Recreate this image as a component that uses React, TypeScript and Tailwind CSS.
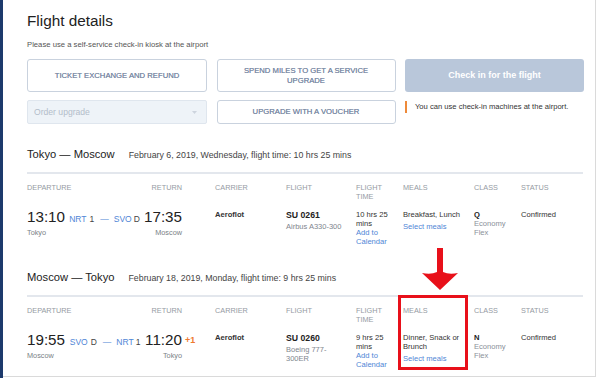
import React from "react";

const blue = "text-[#4f86d6]";

function Header() {
  return (
    <div className="mt-[8.5px] grid grid-cols-[188px_71px_70px_47px_71px_47px_1fr] text-[7.3px] leading-[9px] text-[#959ba3] uppercase">
      <div className="w-[155px] flex justify-between">
        <span>Departure</span>
        <span>Return</span>
      </div>
      <div>Carrier</div>
      <div>Flight</div>
      <div>
        <div>Flight</div>
        <div>Time</div>
      </div>
      <div>Meals</div>
      <div>Class</div>
      <div>Status</div>
    </div>
  );
}

type Row = {
  dep: string;
  arr: string;
  from: string;
  fromT: string;
  to: string;
  toT: string;
  depCity: string;
  arrCity: string;
  plus?: boolean;
  flight: string;
  plane: string[];
  time: string[];
  meals: string[];
  cls: string;
};

function DataRow({ r }: { r: Row }) {
  return (
    <div className="mt-[8.5px] grid grid-cols-[188px_71px_70px_47px_71px_47px_1fr] text-[7.6px] leading-[9px] text-[#333]">
      <div className="grid grid-cols-[155px_1fr]">
        <div>
          <div className="flex items-baseline justify-between leading-[16px]">
            <span className="text-[15.2px] text-[#222]">{r.dep}</span>
            <span className="text-[8.5px] flex items-baseline">
              <span className={blue}>{r.from}</span>
              <span className="ml-[3px] text-[#444]">{r.fromT}</span>
              <span className={`ml-[6px] ${blue}`}>—</span>
              <span className={`ml-[5px] ${blue}`}>{r.to}</span>
              <span className="ml-[2px] text-[#444]">{r.toT}</span>
            </span>
            <span className="text-[15.2px] text-[#222]">{r.arr}</span>
          </div>
          <div className="mt-[0.5px] flex justify-between text-[7.3px] text-[#7a7f86]">
            <span>{r.depCity}</span>
            <span>{r.arrCity}</span>
          </div>
        </div>
        <div className="leading-[16px]">
          {r.plus && (
            <span className="ml-[3px] text-[9px] font-bold text-[#ee7a2f]">+1</span>
          )}
        </div>
      </div>
      <div className="pt-[0.5px] font-bold">Aeroflot</div>
      <div>
        <div className="text-[8.7px] leading-[12px] font-bold text-[#222]">{r.flight}</div>
        <div className="mt-[1px] text-[7.5px] text-[#80868e]">
          {r.plane.map((p) => (
            <div key={p}>{p}</div>
          ))}
        </div>
      </div>
      <div className="pt-[0.5px]">
        <div>{r.time[0]}</div>
        <div>{r.time[1]}</div>
        <div className={blue}>Add to</div>
        <div className={blue}>Calendar</div>
      </div>
      <div className="pt-[0.5px]">
        {r.meals.map((m) => (
          <div key={m}>{m}</div>
        ))}
        <div className={`mt-[3.5px] ${blue}`}>Select meals</div>
      </div>
      <div className="pt-[0.5px]">
        <div className="font-bold text-[#222]">{r.cls}</div>
        <div className="text-[#8a9099]">Economy</div>
        <div className="text-[#8a9099]">Flex</div>
      </div>
      <div className="pt-[0.5px]">Confirmed</div>
    </div>
  );
}

function Section({ title, date, row, className }: { title: string; date: string; row: Row; className?: string }) {
  return (
    <div className={className}>
      <div className="flex items-baseline">
        <span className="text-[11.2px] leading-[14px] text-[#222]">{title}</span>
        <span className="ml-[14px] text-[8.8px] leading-[14px] text-[#444]">{date}</span>
      </div>
      <div className="mt-[10px] h-[2px] w-[556px] bg-[#e3e7ed]" />
      <Header />
      <DataRow r={row} />
    </div>
  );
}

export default function App() {
  const btn =
    "flex items-center justify-center rounded-[3px] border border-[#c9d2de] bg-white text-center text-[7.7px] leading-[10px] text-[#7d8ca6] uppercase [text-shadow:0_0_0.3px_#7d8ca6]";
  return (
    <div
      className="relative flex h-[378px] w-[600px] overflow-hidden bg-white"
      style={{ fontFamily: '"Liberation Sans", Arial, sans-serif' }}
    >
      <div className="h-full w-[3px] bg-[#1d3a6c]" />
      <div className="h-[377px] w-[593px] border-r border-b border-[#dadada] pl-[24px]">
        <div className="mt-[12px] text-[15.3px] leading-[18px] text-[#222]">Flight details</div>
        <div className="mt-[10px] text-[7.7px] leading-[10px] text-[#555]">
          Please use a self-service check-in kiosk at the airport
        </div>
        <div className="mt-[9px] grid grid-cols-[180px_179px_179px] grid-rows-[33px_24px] gap-x-[9.5px] gap-y-[8px]">
          <div className={btn}>Ticket exchange and refund</div>
          <div className={btn}>
            Spend miles to get a service
            <br />
            upgrade
          </div>
          <div className="flex items-center justify-center rounded-[3px] bg-[#b9c7da] text-[9px] font-bold text-white">
            Check in for the flight
          </div>
          <div className="flex items-center justify-between rounded-[2px] border border-[#dfe6ee] bg-[#eef3f8] pl-[6px] pr-[9px] text-[8.6px] text-[#b3bdca]">
            <span>Order upgrade</span>
            <svg width="5" height="3" viewBox="0 0 5 3">
              <path d="M0 0 L5 0 L2.5 3 Z" fill="#cdd4de" />
            </svg>
          </div>
          <div className={btn}>Upgrade with a voucher</div>
          <div className="flex items-start">
            <div className="mt-[1px] h-[12px] w-[2px] bg-[#ee8a3a]" />
            <span className="ml-[8px] mt-[2px] text-[7.6px] leading-[10px] text-[#333]">
              You can use check-in machines at the airport.
            </span>
          </div>
        </div>

        <Section
          className="mt-[23px]"
          title="Tokyo — Moscow"
          date="February 6, 2019, Wednesday, flight time: 10 hrs 25 mins"
          row={{
            dep: "13:10",
            arr: "17:35",
            from: "NRT",
            fromT: "1",
            to: "SVO",
            toT: "D",
            depCity: "Tokyo",
            arrCity: "Moscow",
            flight: "SU 0261",
            plane: ["Airbus A330-300"],
            time: ["10 hrs 25", "mins"],
            meals: ["Breakfast, Lunch"],
            cls: "Q",
          }}
        />
        <Section
          className="mt-[24.5px]"
          title="Moscow — Tokyo"
          date="February 18, 2019, Monday, flight time: 9 hrs 25 mins"
          row={{
            dep: "19:55",
            arr: "11:20",
            from: "SVO",
            fromT: "D",
            to: "NRT",
            toT: "1",
            depCity: "Moscow",
            arrCity: "Tokyo",
            plus: true,
            flight: "SU 0260",
            plane: ["Boeing 777-", "300ER"],
            time: ["9 hrs 25", "mins"],
            meals: ["Dinner, Snack or", "Brunch"],
            cls: "N",
          }}
        />
      </div>

      {/* annotation overlay */}
      <div className="absolute left-[398px] top-[295px] h-[75px] w-[70px] border-[3px] border-[#e8101a]" />
      <svg className="absolute left-[420px] top-[248px]" width="40" height="44" viewBox="0 0 40 44">
        <path
          d="M17 0 L23 0 L23 24 Q29 27 38 25 L20 42 L2 25 Q11 27 17 24 Z"
          fill="#e8101a"
        />
      </svg>
    </div>
  );
}
